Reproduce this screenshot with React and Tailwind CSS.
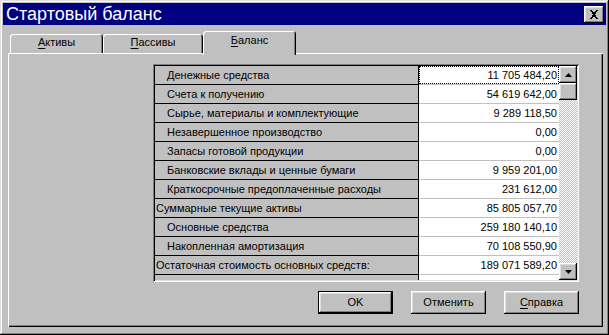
import React from "react";

const rows = [
  { label: "Денежные средства", value: "11 705 484,20", indent: true },
  { label: "Счета к получению", value: "54 619 642,00", indent: true },
  { label: "Сырье, материалы и комплектующие", value: "9 289 118,50", indent: true },
  { label: "Незавершенное производство", value: "0,00", indent: true },
  { label: "Запасы готовой продукции", value: "0,00", indent: true },
  { label: "Банковские вклады и ценные бумаги", value: "9 959 201,00", indent: true },
  { label: "Краткосрочные предоплаченные расходы", value: "231 612,00", indent: true },
  { label: "Суммарные текущие активы", value: "85 805 057,70", indent: false },
  { label: "Основные средства", value: "259 180 140,10", indent: true },
  { label: "Накопленная амортизация", value: "70 108 550,90", indent: true },
  { label: "Остаточная стоимость основных средств:", value: "189 071 589,20", indent: false },
  { label: "Долгосрочные инвестиции", value: "0,00", indent: true },
];

const raised =
  "shadow-[inset_-1px_-1px_0_#000,inset_1px_1px_0_#fff,inset_-2px_-2px_0_#808080,inset_2px_2px_0_#dfdfdf]";

const Arrow = ({ down }) => (
  <svg width="7" height="4" viewBox="0 0 7 4" className={down ? "rotate-180" : ""}>
    <path d="M3.5 0 L7 4 L0 4 Z" fill="#000" />
  </svg>
);

const Tab = ({ first, rest, width, selected }) => (
  <div
    className={`${width} ${
      selected ? "h-[24px] -mb-[2px] pt-[3px] relative z-10" : "h-[19px] pt-[2px]"
    } bg-[#c0c0c0] rounded-t-[3px] text-center leading-[13px] shadow-[inset_1px_1px_0_#fff,inset_-1px_0_0_#000,inset_-2px_0_0_#808080]`}
  >
    <span className="underline underline-offset-[2px]">{first}</span>
    {rest}
  </div>
);

const Button = ({ children, isDefault }) => (
  <div
    className={`w-[75px] h-[23px] bg-[#c0c0c0] flex items-center justify-center ${
      isDefault ? "border border-black" : ""
    } ${raised}`}
  >
    {children}
  </div>
);

export default function App() {
  return (
    <div className="w-[609px] h-[335px] bg-[#c0c0c0] p-[3px] flex flex-col text-[11px] text-black font-[family-name:'Liberation_Sans',Arial,sans-serif] shadow-[inset_-1px_-1px_0_#000,inset_1px_1px_0_#dfdfdf,inset_-2px_-2px_0_#808080,inset_2px_2px_0_#fff]">
      {/* title bar */}
      <div className="h-[22px] bg-[#000080] flex items-center justify-between pl-[3px] pr-[2px]">
        <span className="text-white text-[18px] leading-[22px] -mt-[1px]">Стартовый баланс</span>
        <div className={`w-[20px] h-[17px] bg-[#c0c0c0] flex items-center justify-center ${raised}`}>
          <svg width="10" height="9" viewBox="0 0 10 9" shapeRendering="crispEdges">
            <path d="M1 0h2l2 3 2-3h2l-3 4.5 3 4.5h-2l-2-3-2 3h-2l3-4.5z" fill="#000" />
          </svg>
        </div>
      </div>

      {/* tabs */}
      <div className="mt-[6px] ml-[7px] h-[22px] flex items-end">
        <Tab width="w-[93px]" first="А" rest="ктивы" />
        <Tab width="w-[100px]" first="П" rest="ассивы" />
        <Tab width="w-[93px]" first="Б" rest="аланс" selected />
      </div>

      {/* panel */}
      <div className="ml-[5px] w-[595px] h-[274px] flex flex-col items-end pt-[11px] pr-[24px] shadow-[inset_1px_1px_0_#fff,inset_-1px_-1px_0_#000,inset_-2px_-2px_0_#808080]">
        <div className="w-[426px] h-[218px] p-[2px] flex shadow-[inset_1px_1px_0_#808080,inset_-1px_-1px_0_#fff,inset_2px_2px_0_#000,inset_-2px_-2px_0_#dfdfdf]">
          <div className="flex-1 overflow-hidden flex flex-col">
            {rows.map((r, i) => (
              <div key={i} className="h-[19px] shrink-0 flex leading-[18px]">
                <div
                  className={`w-[264px] bg-[#c0c0c0] border-r border-b border-black whitespace-nowrap overflow-hidden ${
                    r.indent ? "pl-[12px]" : "pl-[1px]"
                  }`}
                >
                  {r.label}
                </div>
                <div className="flex-1 bg-white border-b border-[#c0c0c0] relative text-right pr-[2px]">
                  {i === 0 && <div className="absolute inset-0 border border-dotted border-black" />}
                  {r.value}
                </div>
              </div>
            ))}
          </div>
          <div className="w-[18px] flex flex-col bg-[image:repeating-conic-gradient(#fff_0%_25%,#c0c0c0_0%_50%)] bg-[length:2px_2px]">
            <div className={`h-[17px] bg-[#c0c0c0] flex items-center justify-center ${raised}`}>
              <Arrow />
            </div>
            <div className={`h-[17px] bg-[#c0c0c0] ${raised}`} />
            <div className="flex-1" />
            <div className={`h-[17px] bg-[#c0c0c0] flex items-center justify-center ${raised}`}>
              <Arrow down />
            </div>
          </div>
        </div>

        <div className="mt-[9px] flex gap-[18px]">
          <Button isDefault>OK</Button>
          <Button>Отменить</Button>
          <Button>
            <span className="underline underline-offset-[2px]">С</span>правка
          </Button>
        </div>
      </div>
    </div>
  );
}
